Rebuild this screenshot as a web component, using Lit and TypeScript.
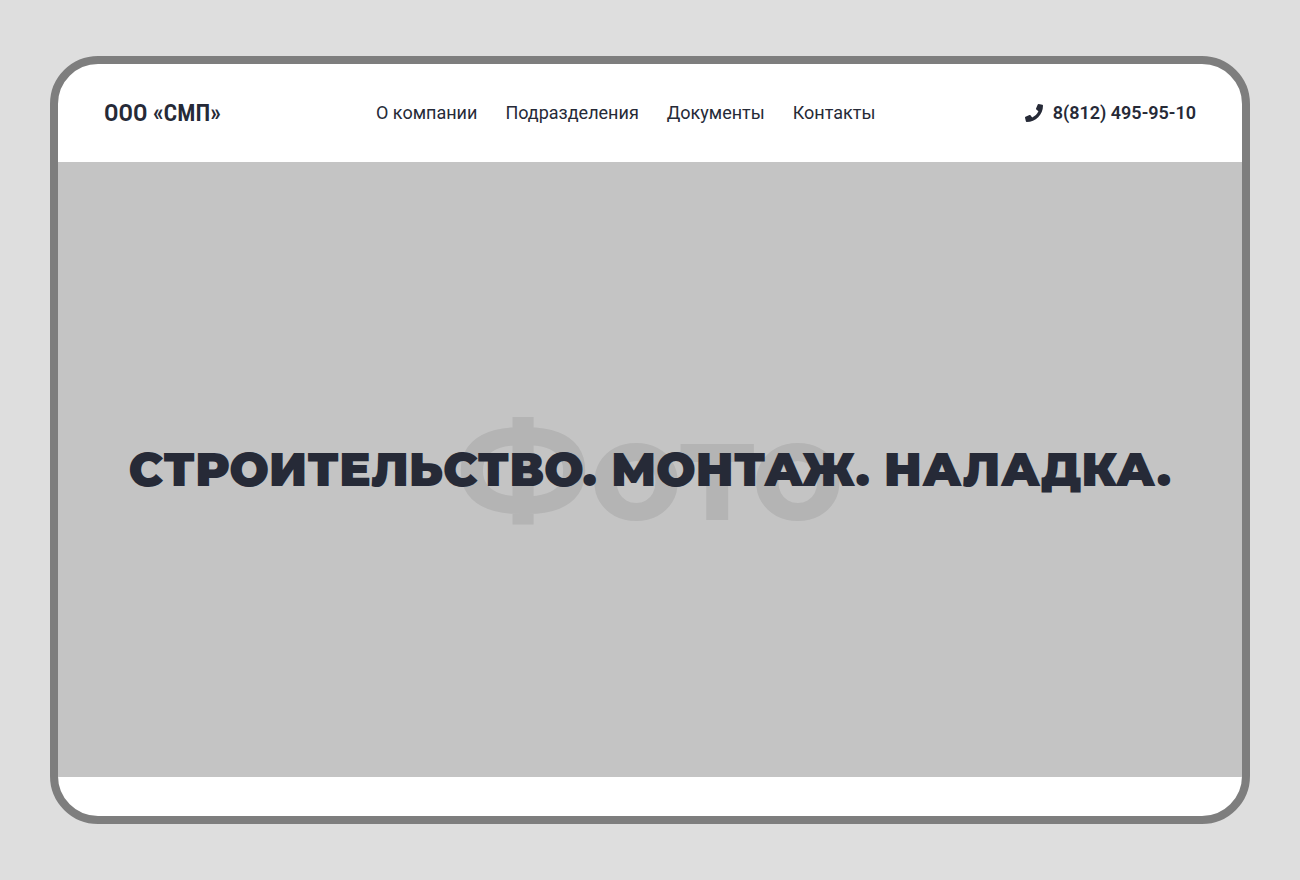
import { LitElement, html, css } from "lit";
import { customElement } from "lit/decorators.js";

const links = [
  { label: "О компании", href: "#about" },
  { label: "Подразделения", href: "#divisions" },
  { label: "Документы", href: "#documents" },
  { label: "Контакты", href: "#contacts" },
];

@customElement("app-root")
export class AppRoot extends LitElement {
  static styles = css`
    :host {
      display: flex;
      box-sizing: border-box;
      min-height: 100vh;
      padding: 56px 50px;
      background: #dedede;
      color: #262a37;
      font-family: Roboto, sans-serif;
    }
    .frame {
      flex: 1;
      min-width: 0;
      display: flex;
      flex-direction: column;
      box-sizing: border-box;
      border: 8px solid #7e7e7e;
      border-radius: 48px;
      background: #fff;
      overflow: hidden;
    }
    .header {
      display: flex;
      align-items: center;
      justify-content: space-between;
      padding: 35px 46px;
      line-height: 28px;
      font-size: 18px;
    }
    a {
      color: inherit;
      text-decoration: none;
      white-space: nowrap;
    }
    .logo {
      font-family: "Roboto Condensed", Roboto, sans-serif;
      font-size: 24px;
      font-weight: 600;
    }
    .nav {
      display: flex;
      gap: 28px;
      padding-left: 6px;
    }
    .phone {
      display: flex;
      align-items: center;
      gap: 10px;
      font-weight: 600;
    }
    .icon {
      width: 18px;
      height: 18px;
      fill: currentColor;
    }
    .hero {
      flex: 1;
      display: grid;
      place-items: center;
      margin-bottom: 39px;
      background: #c4c4c4;
      font-family: Montserrat, Inter, sans-serif;
      white-space: nowrap;
    }
    .watermark,
    .title {
      grid-area: 1 / 1;
      margin: 0;
    }
    .watermark {
      color: #b4b4b4;
      font-size: 141px;
      font-weight: 700;
      line-height: 176px;
    }
    .title {
      font-size: 47px;
      font-weight: 900;
      line-height: 61px;
      z-index: 1;
    }
  `;

  render() {
    return html`
      <div class="frame">
        <header class="header">
          <a class="logo" href="#">ООО «СМП»</a>
          <nav class="nav">
            ${links.map((l) => html`<a href=${l.href}>${l.label}</a>`)}
          </nav>
          <a class="phone" href="tel:+78124959510">
            <svg class="icon" viewBox="0 0 512 512" aria-hidden="true">
              <path d="M493.4 24.6l-104-24c-11.3-2.6-22.9 3.3-27.5 13.9l-48 112c-4.2 9.8-1.4 21.3 6.9 28l60.6 49.6c-36 76.7-98.9 140.5-177.2 177.2l-49.6-60.6c-6.8-8.3-18.2-11.1-28-6.9l-112 48C3.9 366.5-2 378.1.6 389.4l24 104C27.1 504.2 36.7 512 48 512c256.1 0 464-207.500 464-464 0-11.200-7.700-20.900-18.600-23.400z" />
            </svg>
            <span>8(812) 495-95-10</span>
          </a>
        </header>
        <main class="hero">
          <div class="watermark" aria-hidden="true">Фото</div>
          <h1 class="title">СТРОИТЕЛЬСТВО. МОНТАЖ. НАЛАДКА.</h1>
        </main>
      </div>
    `;
  }
}
